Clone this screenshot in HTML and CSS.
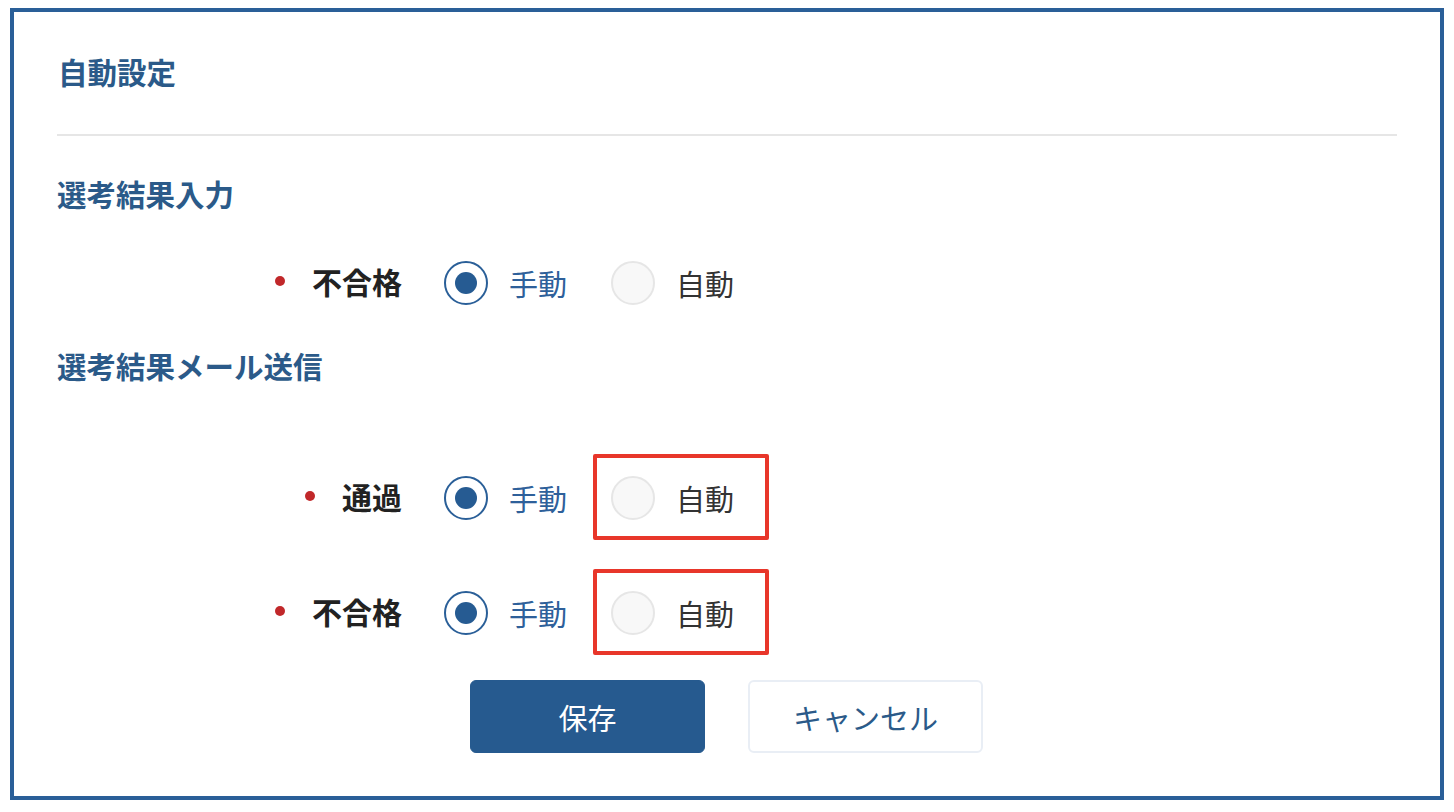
FILE: index.html
```html
<!DOCTYPE html>
<html lang="ja">
<head>
<meta charset="utf-8">
<title>自動設定</title>
<link rel="stylesheet" href="styles.css">
</head>
<body>
<div class="frame">
  <div class="header"><h1 class="title">自動設定</h1></div>

  <h2 class="section first">選考結果入力</h2>
  <div class="row r1">
    <div class="label"><span class="dot"></span><span class="label-text">不合格</span></div>
    <div class="options">
      <label class="option checked"><span class="radio"></span><span class="opt-text">手動</span></label>
      <label class="option"><span class="radio"></span><span class="opt-text">自動</span></label>
    </div>
  </div>

  <h2 class="section second">選考結果メール送信</h2>
  <div class="row r2">
    <div class="label"><span class="dot"></span><span class="label-text">通過</span></div>
    <div class="options">
      <label class="option checked"><span class="radio"></span><span class="opt-text">手動</span></label>
      <label class="option highlight"><span class="radio"></span><span class="opt-text">自動</span></label>
    </div>
  </div>
  <div class="row r3">
    <div class="label"><span class="dot"></span><span class="label-text">不合格</span></div>
    <div class="options">
      <label class="option checked"><span class="radio"></span><span class="opt-text">手動</span></label>
      <label class="option highlight"><span class="radio"></span><span class="opt-text">自動</span></label>
    </div>
  </div>

  <div class="actions">
    <button class="btn primary">保存</button>
    <button class="btn secondary">キャンセル</button>
  </div>
</div>
</body>
</html>
```
FILE: styles.css
```css
* { box-sizing: border-box; }
html, body { margin: 0; padding: 0; background: #fff; }
body {
  font-family: "Noto Sans CJK JP", "Noto Sans", sans-serif;
  color: #222;
}
.frame {
  margin: 8px 0 0 10px;
  width: 1434px;
  height: 792px;
  border: 4px solid #2a5f98;
  padding: 0 43px 0 43px;
}
.header {
  height: 124px;
  border-bottom: 2px solid #e6e6e6;
  display: flex;
  align-items: center;
}
.title {
  margin: 0 0 4px 0;
  font-size: 29.5px;
  line-height: 40px;
  font-weight: 700;
  color: #2b5a89;
  padding-left: 1px;
}
.section {
  margin: 0;
  font-size: 29.5px;
  line-height: 40px;
  font-weight: 700;
  color: #2b5a89;
}
.section.first { margin-top: 37px; }
.section.second { margin-top: 40px; }
.row {
  display: flex;
  align-items: center;
  height: 44px;
}
.r1 { margin-top: 48px; }
.r2 { margin-top: 91px; }
.r3 { margin-top: 71px; }
.label {
  width: 345px;
  display: flex;
  justify-content: flex-end;
  align-items: center;
}
.dot {
  width: 10px;
  height: 10px;
  border-radius: 50%;
  background: #c1282a;
  margin-right: 27px;
  position: relative;
  top: -2px;
}
.label-text {
  font-size: 30px;
  font-weight: 700;
  line-height: 40px;
  color: #222;
  position: relative;
  top: -2px;
}
.options {
  display: flex;
  align-items: center;
  gap: 44px;
  margin-left: 42px;
}
.option {
  display: flex;
  align-items: center;
  gap: 21px;
  position: relative;
}
.radio {
  width: 44px;
  height: 44px;
  border-radius: 50%;
  border: 2px solid #e6e6e6;
  background: #f8f8f8;
  display: flex;
  align-items: center;
  justify-content: center;
}
.option.checked .radio {
  border-color: #2a5f98;
  background: #fff;
}
.option.checked .radio::after {
  content: "";
  width: 22px;
  height: 22px;
  border-radius: 50%;
  background: #265b92;
}
.opt-text {
  font-size: 29px;
  line-height: 40px;
  color: #333;
}
.option.checked .opt-text { color: #2e609a; }
.option.highlight::after {
  content: "";
  position: absolute;
  left: -18px;
  right: -35px;
  top: -22px;
  bottom: -20px;
  border: 4px solid #e8362a;
  border-radius: 2px;
}
.actions {
  display: flex;
  gap: 43px;
  margin-top: 45px;
  padding-left: 413px;
}
.btn {
  width: 235px;
  height: 73px;
  border-radius: 6px;
  font-family: inherit;
  font-size: 29px;
  cursor: pointer;
}
.btn.primary {
  background: #265a8f;
  border: 1px solid #265a8f;
  color: #fff;
}
.btn.secondary {
  background: #fff;
  border: 2px solid #e9eef5;
  color: #2b5a89;
}
```
